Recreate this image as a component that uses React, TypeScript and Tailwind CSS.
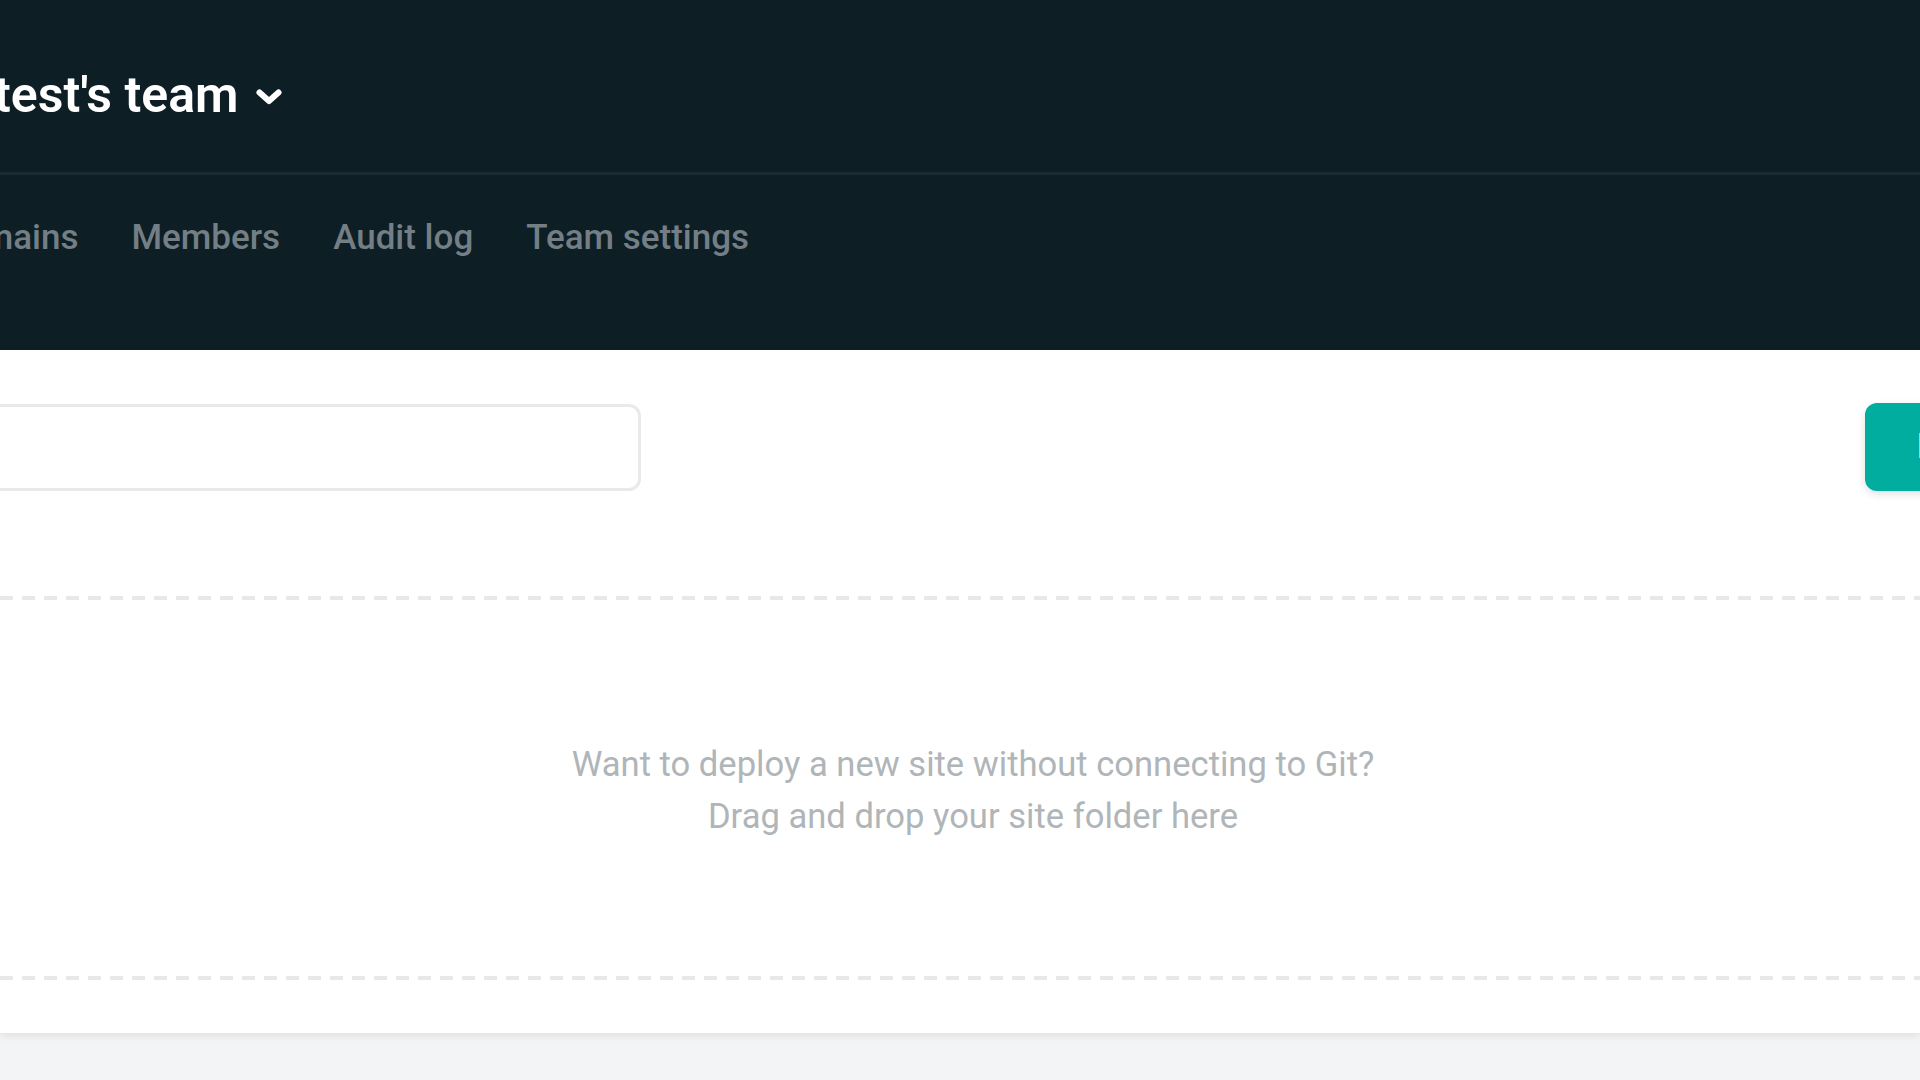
import React from "react";

const navItems = ["Domains", "Members", "Audit log", "Team settings"];

function Chevron() {
    return (
        <svg width="28" height="18" viewBox="0 0 28 18" fill="none" className="ml-[17px] mt-[5px]">
            <path d="M4.5 4.5 L14 13 L23.5 4.5" stroke="white" strokeWidth="6" strokeLinecap="round" strokeLinejoin="round" />
        </svg>
    );
}

export default function App() {
    return (
        <div className="min-h-screen overflow-hidden bg-[#f3f4f5] font-['Roboto',sans-serif]">
            {/* Team header */}
            <header className="h-[350px] bg-[#0e1e25]">
                <div className="flex h-[175px] items-center border-b-[3px] border-[#1c2b32] pt-[17px]">
                    <h1 className="ml-[-6px] whitespace-nowrap text-[50px] font-semibold leading-none text-white">
                        test's team
                    </h1>
                    <Chevron />
                </div>
                <nav className="ml-[-60px] flex gap-[53px] pt-[43px]">
                    {navItems.map((item) => (
                        <a key={item} href="#" className="whitespace-nowrap text-[35px] font-medium leading-[40px] text-[#747f85]">
                            {item}
                        </a>
                    ))}
                </nav>
            </header>

            {/* Sites panel */}
            <main className="bg-white pb-[53px] pt-[53px] shadow-[0_3px_8px_rgba(0,0,0,0.08)]">
                <div className="flex items-center justify-between">
                    <input
                        type="text"
                        aria-label="Search sites"
                        className="ml-[-40px] h-[87px] w-[681px] rounded-[12px] border-[3px] border-[#e8eaea] bg-white outline-none"
                    />
                    <button className="mr-[-265px] flex h-[88px] w-[320px] items-center whitespace-nowrap rounded-[12px] bg-[#00ad9f] pl-[52px] text-[35px] font-semibold text-white shadow-[0_3px_8px_rgba(0,0,0,0.12)]">
                        New site from Git
                    </button>
                </div>

                {/* Drop zone */}
                <div className="mt-[105px]">
                    <div className="h-[4px] bg-[repeating-linear-gradient(90deg,#e6e8e9_0_13px,transparent_13px_22px)]" />
                    <div className="flex h-[376px] flex-col items-center justify-center pl-[26px] pt-[4px] text-center text-[34.6px] leading-[52px] text-[#afb5b8]">
                        <p>Want to deploy a new site without connecting to Git?</p>
                        <p>Drag and drop your site folder here</p>
                    </div>
                    <div className="h-[4px] bg-[repeating-linear-gradient(90deg,#e6e8e9_0_13px,transparent_13px_22px)]" />
                </div>
            </main>
        </div>
    );
}
